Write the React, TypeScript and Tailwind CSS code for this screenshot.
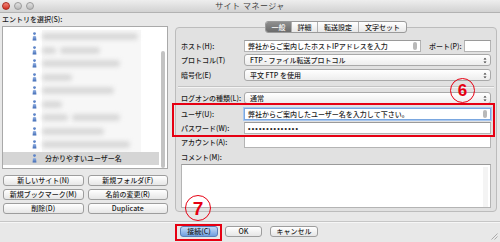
import React from 'react';

const jp = "font-['Noto_Sans_CJK_JP','Noto_Sans',sans-serif]";

interface TreeRow {
  name?: string;
  blur: number[];
}

const rows: TreeRow[] = [
  { blur: [96] },
  { blur: [14, 40] },
  { blur: [78] },
  { blur: [30, 0] },
  { blur: [72] },
  { blur: [20] },
  { blur: [26, 48] },
  { blur: [62] },
  { blur: [88] },
  { name: '分かりやすいユーザー名', blur: [] },
];

const UserIcon = () => (
  <svg width="5" height="9" viewBox="0 0 5 9">
    <defs>
      <linearGradient id="ug" x1="0" y1="0" x2="0" y2="1">
        <stop offset="0" stopColor="#9cb8e6" />
        <stop offset="1" stopColor="#3d68b3" />
      </linearGradient>
    </defs>
    <circle cx="2.5" cy="1.6" r="1.4" fill="#5d84c8" />
    <path d="M0.6 8.6 L0.9 4.4 Q2.5 3.2 4.1 4.4 L4.4 8.6 Z" fill="url(#ug)" />
  </svg>
);

const Arrows = () => (
  <svg width="4" height="7" viewBox="0 0 4 7" className="shrink-0">
    <path d="M0.5 2.6 L2 0.8 L3.5 2.6 Z" fill="#333" />
    <path d="M0.5 4.4 L2 6.2 L3.5 4.4 Z" fill="#333" />
  </svg>
);

const Thumb = () => <div className="w-[4px] h-[8px] rounded-full bg-[#b9b9b9] shrink-0" />;

const Label: React.FC<{ text: string }> = ({ text }) => (
  <div className="w-[63px] shrink-0 whitespace-nowrap">{text}</div>
);

const TextInput: React.FC<{ value?: string; focus?: boolean; thumb?: boolean; className?: string }> = ({
  value,
  focus,
  thumb,
  className = '',
}) => (
  <div
    className={`h-[12px] bg-white flex items-center px-[3px] gap-1 ${
      focus ? 'border border-[#7aa7e0] shadow-[0_0_0_1px_#a9c8f0]' : 'border border-[#b4b4b4] border-t-[#9a9a9a]'
    } ${className}`}
  >
    <div className="flex-1 whitespace-nowrap">{value}</div>
    {thumb && <Thumb />}
  </div>
);

const Combo: React.FC<{ value: string }> = ({ value }) => (
  <div className="flex-1 h-[12px] rounded-[3px] border border-[#a9a9a9] bg-gradient-to-b from-white to-[#ededed] flex items-center pl-[5px] pr-[3px]">
    <div className="flex-1 whitespace-nowrap">{value}</div>
    <Arrows />
  </div>
);

const Btn: React.FC<{ text: string; className?: string }> = ({ text, className = '' }) => (
  <div
    className={`h-[11px] rounded-[3px] border border-[#9d9d9d] bg-gradient-to-b from-white to-[#e6e6e6] flex items-center justify-center whitespace-nowrap ${className}`}
  >
    {text}
  </div>
);

export default function App() {
  return (
    <div className={`w-[500px] h-[242px] bg-[#e8e8e8] relative overflow-hidden text-[7px] font-medium leading-none text-[#1e1e1e] ${jp}`}>
      {/* title bar */}
      <div className="h-[13px] bg-gradient-to-b from-[#eeeeee] to-[#d2d2d2] border-b border-[#b2b2b2] grid grid-cols-[1fr_auto_1fr] items-center">
        <div className="flex items-center gap-[4px] pl-[2px]">
          <div className="w-[8px] h-[8px] rounded-full bg-gradient-to-b from-[#f4857a] to-[#d12a1c] border border-[#a8281c]" />
          <div className="w-[8px] h-[8px] rounded-full bg-gradient-to-b from-[#e2e2e2] to-[#b8b8b8] border border-[#9a9a9a]" />
          <div className="w-[8px] h-[8px] rounded-full bg-gradient-to-b from-[#e2e2e2] to-[#b8b8b8] border border-[#9a9a9a]" />
        </div>
        <div className="text-[8px] font-normal text-[#3c3c3c] tracking-[0.5px]">サイト マネージャ</div>
        <div />
      </div>

      {/* body */}
      <div className="h-[208px] flex pl-[2px]">
        {/* left column */}
        <div className="w-[166px] shrink-0 flex flex-col">
          <div className="h-[13px] flex items-center">エントリを選択(S):</div>
          <div className="h-[143px] bg-white border border-[#a9a9a9] flex">
            <div className="flex-1 pt-[3px]">
              {rows.map((r, i) => (
                <div
                  key={i}
                  className={`h-[13.5px] flex items-center pl-[29px] gap-[5px] ${r.name ? 'bg-[#d5d5d5]' : ''}`}
                >
                  <UserIcon />
                  {r.name ? (
                    <span className="ml-[3px]">{r.name}</span>
                  ) : (
                    <div className="flex-1 flex items-center gap-[4px] h-full bg-[#f7f7f7] mr-[18px]">
                      {r.blur.map((w, j) => (
                        <div key={j} className="h-[7px] bg-[#d9d9d9] blur-[2px] rounded" style={{ width: w }} />
                      ))}
                    </div>
                  )}
                </div>
              ))}
            </div>
            <div className="w-[8px] shrink-0 pt-[24px] flex justify-center">
              <div className="w-[4px] h-full rounded-full bg-[#c3c3c3]" />
            </div>
          </div>
          <div className="grid grid-cols-2 gap-x-[4px] gap-y-[3px] mt-[6px] pl-[1px]">
            <Btn text="新しいサイト(N)" />
            <Btn text="新規フォルダ(F)" />
            <Btn text="新規ブックマーク(M)" />
            <Btn text="名前の変更(R)" />
            <Btn text="削除(D)" />
            <Btn text="Duplicate" />
          </div>
        </div>

        {/* right column */}
        <div className="ml-[7px] mt-[14px]">
          <div className="w-[322px] h-[185px] border border-[#bcbcbc] rounded-[4px] bg-[#e1e1e1] flex flex-col px-[4px]">
            <div className="flex justify-center -mt-[7px]">
              <div className="flex h-[12px] rounded-[3px] border border-[#9a9a9a] bg-gradient-to-b from-white to-[#e8e8e8] overflow-hidden">
                <div className="w-[25px] flex items-center justify-center bg-gradient-to-b from-[#8e8e8e] to-[#6b6b6b] text-white">一般</div>
                <div className="w-[26px] flex items-center justify-center border-l border-[#b0b0b0]">詳細</div>
                <div className="w-[41px] flex items-center justify-center border-l border-[#b0b0b0]">転送設定</div>
                <div className="w-[48px] flex items-center justify-center border-l border-[#b0b0b0]">文字セット</div>
              </div>
            </div>

            <div className="flex items-center mt-[7px] pl-[1px] pr-[1px]">
              <Label text="ホスト(H):" />
              <TextInput value="弊社からご案内したホストIPアドレスを入力" thumb className="w-[177px]" />
              <div className="ml-[8px] w-[35px] whitespace-nowrap">ポート(P):</div>
              <TextInput className="flex-1" />
            </div>
            <div className="flex items-center mt-[2px] pl-[1px] pr-[1px]">
              <Label text="プロトコル(T)" />
              <Combo value="FTP - ファイル転送プロトコル" />
            </div>
            <div className="flex items-center mt-[3px] pl-[1px] pr-[1px]">
              <Label text="暗号化(E)" />
              <Combo value="平文 FTP を使用" />
            </div>
            <div className="mt-[5px] border-t border-[#c4c4c4] border-b border-b-[#f4f4f4] -mx-[2px]" />
            <div className="flex items-center mt-[4px] pl-[1px] pr-[1px]">
              <Label text="ログオンの種類(L):" />
              <Combo value="通常" />
            </div>
            <div className="flex items-center mt-[4px] pl-[1px] pr-[1px]">
              <Label text="ユーザ(U):" />
              <TextInput value="弊社からご案内したユーザー名を入力して下さい。" focus thumb className="flex-1" />
            </div>
            <div className="flex items-center mt-[2px] pl-[1px] pr-[1px]">
              <Label text="パスワード(W):" />
              <TextInput
                value="••••••••••••••"
                className="flex-1 tracking-[1.2px] font-['Liberation_Sans',sans-serif] text-[7px] font-bold"
              />
            </div>
            <div className="flex items-center mt-[2px] pl-[1px] pr-[1px]">
              <Label text="アカウント(A):" />
              <TextInput className="flex-1" />
            </div>
            <div className="mt-[6px] pl-[1px]">コメント(M):</div>
            <div className="mt-[3px] ml-[1px] mr-[1px] h-[44px] bg-white border border-[#b4b4b4] border-t-[#9a9a9a] flex justify-end pr-[2px] pt-[2px]">
              <div className="w-[5px] h-full bg-[#f4f4f4]" />
            </div>
          </div>
        </div>
      </div>

      {/* bottom bar */}
      <div className="border-t border-[#c6c6c6]">
        <div className="h-[1px] bg-[#f6f6f6]" />
        <div className="flex pt-[3px] pl-[180px]">
          <div className="w-[38px] h-[11px] rounded-[3px] border border-[#5a7fb8] bg-gradient-to-b from-[#c7dcf7] to-[#6e9fe0] flex items-center justify-center">接続(C)</div>
          <Btn text="OK" className="w-[37px] ml-[7px]" />
          <Btn text="キャンセル" className="w-[48px] ml-[8px]" />
        </div>
      </div>

      {/* resize grip */}
      <svg className="absolute right-[2px] bottom-[2px]" width="8" height="8" viewBox="0 0 8 8">
        <path d="M7.5 1.5 L1.5 7.5 M7.5 4.5 L4.5 7.5" stroke="#9a9a9a" strokeWidth="0.8" />
      </svg>

      {/* annotations */}
      <div className="absolute left-[172px] top-[103px] w-[323px] h-[34px] border-2 border-[#e60012]" />
      <div className="absolute left-[450px] top-[78px] w-[25px] h-[25px] rounded-full border border-[#e60012] flex items-center justify-center text-[#e60012] text-[17px] font-bold font-['Liberation_Sans',sans-serif]">
        6
      </div>
      <div className="absolute left-[175px] top-[224px] w-[47px] h-[17px] border-2 border-[#e60012]" />
      <div className="absolute left-[185px] top-[195px] w-[26px] h-[26px] rounded-full border border-[#e60012] flex items-center justify-center text-[#e60012] text-[19px] font-bold font-['Liberation_Sans',sans-serif]">
        7
      </div>
    </div>
  );
}
